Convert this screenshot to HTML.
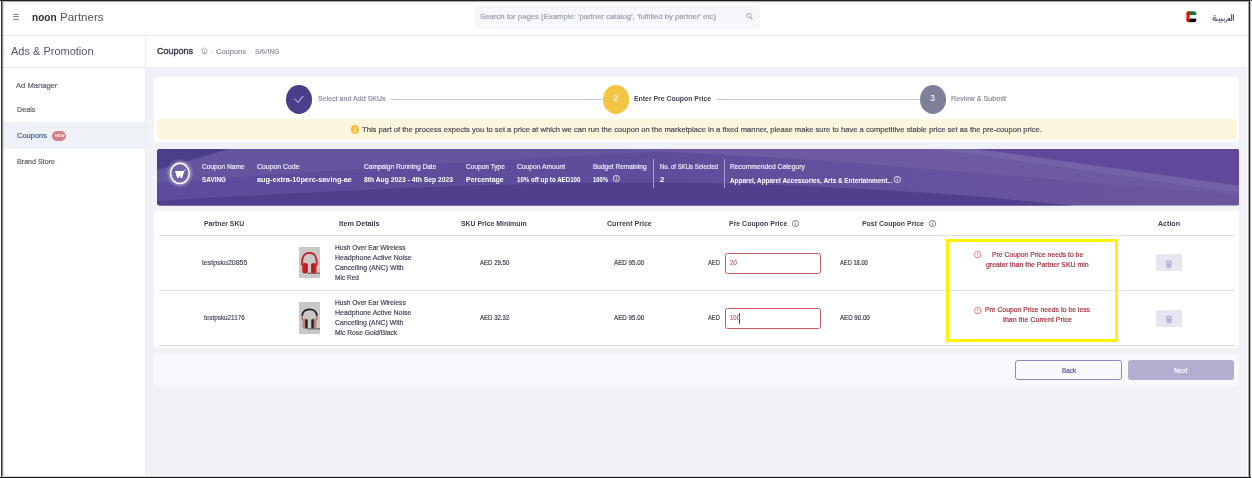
<!DOCTYPE html>
<html><head><meta charset="utf-8">
<style>
*{box-sizing:border-box;margin:0;padding:0}
html,body{width:1252px;height:478px;overflow:hidden;background:#fff;font-family:"Liberation Sans",sans-serif}
.a{position:absolute}
.t{position:absolute;white-space:nowrap;line-height:normal;transform-origin:0 0;font-family:"Liberation Sans",sans-serif}
</style></head><body>
<!-- header -->
<div class="a" style="left:0;top:35px;width:1249px;height:1px;background:#e5e9f0"></div>
<!-- hamburger -->
<div class="a" style="left:13px;top:13.5px;width:6px;height:1px;background:#7f8a9c"></div>
<div class="a" style="left:13px;top:16.3px;width:6px;height:1px;background:#7f8a9c"></div>
<div class="a" style="left:13px;top:19px;width:6px;height:1px;background:#7f8a9c"></div>
<!-- search -->
<div class="a" style="left:475px;top:6px;width:285px;height:22.5px;background:#f6f7fb;border-radius:3px"></div>
<svg class="a" style="left:745px;top:12px" width="9" height="9" viewBox="0 0 9 9"><circle cx="3.8" cy="3.5" r="2.1" fill="none" stroke="#9aa2b0" stroke-width="0.95"/><line x1="5.4" y1="5.2" x2="7.4" y2="7.6" stroke="#9aa2b0" stroke-width="1.1"/></svg>
<!-- flag -->
<svg class="a" style="left:1186px;top:11px" width="11" height="11.5" viewBox="0 0 11 11.5">
<defs><clipPath id="fc"><rect x="0.5" y="0.3" width="9.8" height="10.9" rx="2.6"/></clipPath></defs>
<g clip-path="url(#fc)"><rect x="0" y="0" width="11" height="4" fill="#0a7a2f"/><rect x="0" y="4" width="11" height="3.6" fill="#fff"/><rect x="0" y="7.6" width="11" height="4" fill="#000"/><rect x="0" y="0" width="3.4" height="11.5" fill="#f00"/></g></svg>
<!-- arabic -->
<svg class="a" style="left:1211px;top:12px" width="24" height="11" viewBox="0 0 24 11">
<g fill="none" stroke="#4f5670" stroke-width="1.1" stroke-linecap="round" stroke-linejoin="round">
<path d="M22.4 2.6 V8.3"/><path d="M20.6 2.6 V8.3 H18.6"/>
<path d="M18.6 8.3 C17.2 8.3 16.6 7.2 17.4 6.4 C18.1 5.8 19 6.5 18.6 8.3"/>
<path d="M16.9 8.3 H15.6 C15.6 9.6 14.8 10.2 13.8 10.2"/>
<path d="M13.2 8.3 V6.9 M13.2 8.3 H10.6 V6.9 M10.6 8.3 H8.6 V6.9 M8.6 8.3 H5.2"/>
<path d="M5.2 8.3 C3.2 8.6 1.9 8 2 6.8 C2.2 5.7 3.6 5.4 4.6 6.2 C5.3 6.8 5.3 8 5.2 8.3"/>
</g>
<g fill="#4f5670"><circle cx="10.9" cy="10" r="0.55"/><circle cx="8.2" cy="10" r="0.55"/><circle cx="9.4" cy="10.2" r="0.5"/><circle cx="3" cy="3.7" r="0.55"/><circle cx="4.5" cy="3.7" r="0.55"/></g>
</svg>
<!-- sidebar -->
<div class="a" style="left:145px;top:36px;width:1px;height:442px;background:#e9ebf0"></div>
<div class="a" style="left:0;top:67px;width:1249px;height:1px;background:#e6e9ef"></div>
<div class="a" style="left:2px;top:122px;width:143px;height:27px;background:#eef2f7"></div>
<div class="a" style="left:51.9px;top:130.9px;width:14.2px;height:10px;background:#d08084;border-radius:5px"></div>
<div class="t" style="left:55.3px;top:132.9px;font-size:4.2px;font-weight:700;color:#fbeeee;transform:scaleX(0.98)">NEW</div>
<!-- main bg -->
<div class="a" style="left:146px;top:68px;width:1100.7px;height:407.8px;background:#f1f2f7"></div>
<!-- breadcrumb icons -->
<svg class="a" style="left:200px;top:46px" width="9" height="9" viewBox="0 0 9 9"><path d="M1.3 4.6 L4.5 1.6 L7.7 4.6 M2.3 3.8 V7.6 H6.7 V3.8 M3.9 7.6 V5.8 H5.1 V7.6" fill="none" stroke="#9da1ab" stroke-width="0.7"/></svg>
<div class="a" style="left:211.3px;top:50.8px;width:1.6px;height:1.6px;border-radius:1px;background:#d3d6dc"></div>
<div class="a" style="left:249.8px;top:50.8px;width:1.6px;height:1.6px;border-radius:1px;background:#d3d6dc"></div>
<!-- stepper card -->
<div class="a" style="left:154px;top:77px;width:1085px;height:65px;background:#fff;border-radius:3px"></div>
<div class="a" style="left:391px;top:99px;width:211px;height:1px;background:#c9c8d8"></div>
<div class="a" style="left:717px;top:99px;width:203px;height:1px;background:#c9c8d8"></div>
<div class="a" style="left:286px;top:85.2px;width:26.3px;height:28.6px;border-radius:50%;background:#4a3f8a"></div>
<svg class="a" style="left:286px;top:85px" width="27" height="29" viewBox="0 0 27 29"><path d="M8.4 13.6 L12.2 17.4 L17.3 10.9" fill="none" stroke="#fff" stroke-width="0.8"/></svg>
<div class="a" style="left:602.9px;top:85.3px;width:26.2px;height:28.6px;border-radius:50%;background:#f2c544"></div>
<div class="t" style="left:613.2px;top:93px;font-size:8.8px;color:#fff">2</div>
<div class="a" style="left:919.8px;top:85.3px;width:26.2px;height:28.6px;border-radius:50%;background:#7c8199"></div>
<div class="t" style="left:930.1px;top:93px;font-size:8.8px;color:#fff">3</div>
<!-- notice -->
<div class="a" style="left:156.5px;top:119.4px;width:1080.5px;height:19.8px;background:#fdf5dc;border-radius:3.5px"></div>
<div class="a" style="left:350.6px;top:125px;width:8.6px;height:8.8px;border-radius:50%;background:#f0c03e"></div>
<svg class="a" style="left:350.6px;top:125px" width="9" height="9" viewBox="0 0 9 9"><path d="M4.6 3.9 L4.1 6.9" stroke="#fff" stroke-width="1.1" stroke-linecap="round"/><circle cx="4.8" cy="2.5" r="0.55" fill="#fff"/></svg>
<!-- banner -->
<svg class="a" style="left:156.5px;top:149.2px" width="1082.4" height="57" viewBox="0 0 1082.4 57">
<defs><clipPath id="bc"><rect x="0" y="0" width="1082.4" height="56.6" rx="3"/></clipPath></defs>
<g clip-path="url(#bc)">
<defs><linearGradient id="bg1" x1="0" x2="1" y1="0" y2="0"><stop offset="0" stop-color="#5c4c9b"/><stop offset="0.45" stop-color="#5e4d9b"/><stop offset="0.75" stop-color="#67539d"/><stop offset="1" stop-color="#6a569e"/></linearGradient></defs>
<rect width="1083" height="57" fill="url(#bg1)"/>
<path d="M0 21 Q38 10 71 0 H560 Q300 12 0 34 Z" fill="#6555a0"/>
<path d="M0 0 H71 Q38 10 0 21 Z" fill="#4d3e8b"/>
<path d="M0 52 C150 43 350 33 500 33.5 C640 34 800 44 920 57 H0 Z" fill="#4f3f8d"/>
<path d="M450 0 H820 L1083 37 V46 C950 35 800 22 643 10 C560 5 500 2 450 0 Z" fill="#6d5aa0"/>
<path d="M820 0 H1083 V37 Z" fill="#62489a"/>
<path d="M820 0 L1083 37 V43 C960 28 880 12 770 0 Z" fill="#7462a6"/>
</g></svg>
<svg class="a" style="left:164px;top:157px" width="32" height="33" viewBox="0 0 32 33">
<defs><filter id="gl" x="-50%" y="-50%" width="200%" height="200%"><feGaussianBlur stdDeviation="1.6"/></filter></defs>
<ellipse cx="15.9" cy="16.35" rx="10" ry="10.9" fill="none" stroke="#fff" stroke-width="3" opacity="0.45" filter="url(#gl)"/>
<ellipse cx="15.9" cy="16.35" rx="9.3" ry="10.2" fill="#7568ad" opacity="0.7"/>
<ellipse cx="15.9" cy="16.35" rx="9.3" ry="10.2" fill="none" stroke="#fff" stroke-width="1.5"/>
<path d="M11 14 L20.3 14 L18.6 19.4 L18.2 20.9 L16.6 20.9 L16.3 19.5 L15 19.5 L14.7 20.9 L13.1 20.9 L12.7 19.4 Z" fill="#fff"/>
<path d="M19.8 14.2 L21.5 12.1" stroke="#fff" stroke-width="0.7"/>
</svg>
<div class="a" style="left:653px;top:159.4px;width:1.1px;height:28.2px;background:#a99fcf"></div>
<div class="a" style="left:724px;top:159px;width:1px;height:28.5px;background:#a99fcf"></div>
<svg class="a" style="left:612px;top:174px" width="9" height="9" viewBox="0 0 9 9"><circle cx="4.3" cy="4.5" r="3.1" fill="none" stroke="#fff" stroke-width="0.8"/><line x1="4.3" y1="3.6" x2="4.3" y2="6.2" stroke="#fff" stroke-width="0.8"/><circle cx="4.3" cy="2.6" r="0.45" fill="#fff"/></svg>
<svg class="a" style="left:893px;top:175px" width="9" height="9" viewBox="0 0 9 9"><circle cx="4.3" cy="4.5" r="3.1" fill="none" stroke="#fff" stroke-width="0.8"/><line x1="4.3" y1="3.6" x2="4.3" y2="6.2" stroke="#fff" stroke-width="0.8"/><circle cx="4.3" cy="2.6" r="0.45" fill="#fff"/></svg>
<!-- table card -->
<div class="a" style="left:154px;top:210.6px;width:1085px;height:137.8px;background:#fff;border-radius:4px"></div>
<div class="a" style="left:159px;top:235px;width:1075px;height:1px;background:#dfdfe1"></div>
<div class="a" style="left:159px;top:290px;width:1075px;height:1px;background:#dfdfe1"></div>
<div class="a" style="left:159px;top:345px;width:1075px;height:1.2px;background:#d5d5d8"></div>
<svg class="a" style="left:791px;top:219px" width="9" height="9" viewBox="0 0 9 9"><circle cx="4.5" cy="4.6" r="3.1" fill="none" stroke="#50546a" stroke-width="0.75"/><line x1="4.5" y1="3.8" x2="4.5" y2="6.2" stroke="#50546a" stroke-width="0.75"/><circle cx="4.5" cy="2.8" r="0.4" fill="#50546a"/></svg>
<svg class="a" style="left:928px;top:219px" width="9" height="9" viewBox="0 0 9 9"><circle cx="4.5" cy="4.6" r="3.1" fill="none" stroke="#50546a" stroke-width="0.75"/><line x1="4.5" y1="3.8" x2="4.5" y2="6.2" stroke="#50546a" stroke-width="0.75"/><circle cx="4.5" cy="2.8" r="0.4" fill="#50546a"/></svg>
<!-- product images -->
<svg class="a" style="left:299.2px;top:247.1px" width="21" height="31" viewBox="0 0 21 31"><rect width="21" height="31" fill="#c8c8c8"/>
<rect x="8.6" y="25.6" width="12.4" height="1.3" fill="#6e6e6e"/>
<path d="M3.1 18.5 C2.4 9.5 5.6 5.9 10.4 5.9 C15.2 5.9 18.4 9.5 17.7 18.5" fill="none" stroke="#c41d27" stroke-width="1.7"/>
<rect x="3.3" y="16" width="5.4" height="10.6" rx="2.3" fill="#cd2029"/><rect x="12.1" y="16" width="5.4" height="10.6" rx="2.3" fill="#cd2029"/>
<rect x="6.8" y="17" width="1.5" height="8.6" fill="#a5161f"/><rect x="12.5" y="17" width="1.5" height="8.6" fill="#a5161f"/>
</svg>
<svg class="a" style="left:299.2px;top:302.3px" width="21" height="32" viewBox="0 0 21 32"><rect width="21" height="32" fill="#c8c8c8"/>
<rect x="8.4" y="26.2" width="12.6" height="1.3" fill="#6e6e6e"/>
<path d="M3.2 14 C3.2 10 6 7.3 10.5 7.3 C15 7.3 17.8 10 17.8 14" fill="none" stroke="#1f1f22" stroke-width="1.8"/>
<path d="M3.2 13.5 C3 15.5 3.2 17 3.4 18.5 M17.8 13.5 C18 15.5 17.8 17 17.6 18.5" fill="none" stroke="#a8786c" stroke-width="1.4"/>
<rect x="3.6" y="16.6" width="5" height="10.2" rx="2" fill="#b58476"/><rect x="12.4" y="16.6" width="5" height="10.2" rx="2" fill="#b58476"/>
<rect x="6.3" y="17.2" width="2.3" height="9.4" rx="1" fill="#222226"/><rect x="12.4" y="17.2" width="2.3" height="9.4" rx="1" fill="#222226"/>
</svg>
<!-- inputs -->
<div class="a" style="left:725.3px;top:253.1px;width:95.5px;height:20.5px;border:1.3px solid #c95a5d;border-radius:2.5px"></div>
<div class="a" style="left:725.3px;top:308.2px;width:95.5px;height:20.8px;border:1.3px solid #c95a5d;border-radius:2.5px"></div>
<div class="a" style="left:739px;top:313px;width:0.8px;height:10.5px;background:#7a2a30"></div>
<!-- yellow box -->
<div class="a" style="left:945.8px;top:239px;width:172.4px;height:103.4px;border:3.4px solid #fff300"></div>
<svg class="a" style="left:973px;top:250px" width="10" height="10" viewBox="0 0 10 10"><circle cx="4.6" cy="4.6" r="3.2" fill="none" stroke="#e25d5d" stroke-width="0.8"/><line x1="4.6" y1="2.9" x2="4.6" y2="5.2" stroke="#e25d5d" stroke-width="0.8"/><circle cx="4.6" cy="6.3" r="0.4" fill="#e25d5d"/></svg>
<svg class="a" style="left:972.8px;top:305.5px" width="10" height="10" viewBox="0 0 10 10"><circle cx="4.6" cy="4.6" r="3.2" fill="none" stroke="#e25d5d" stroke-width="0.8"/><line x1="4.6" y1="2.9" x2="4.6" y2="5.2" stroke="#e25d5d" stroke-width="0.8"/><circle cx="4.6" cy="6.3" r="0.4" fill="#e25d5d"/></svg>
<!-- trash -->
<div class="a" style="left:1156px;top:254.2px;width:26px;height:17.3px;background:#e7e5f1;border-radius:2px"></div>
<div class="a" style="left:1156px;top:309.7px;width:26px;height:17px;background:#e7e5f1;border-radius:2px"></div>
<svg class="a" style="left:1165px;top:258.5px" width="8" height="10" viewBox="0 0 8 10"><path d="M1.2 2.4 H6.8 M1.8 2.8 L2.4 8.6 H5.6 L6.2 2.8 M3.2 4 L3.4 7.4 M4.8 4 L4.6 7.4" fill="none" stroke="#9c98c8" stroke-width="0.9"/></svg>
<svg class="a" style="left:1165px;top:313.7px" width="8" height="10" viewBox="0 0 8 10"><path d="M1.2 2.4 H6.8 M1.8 2.8 L2.4 8.6 H5.6 L6.2 2.8 M3.2 4 L3.4 7.4 M4.8 4 L4.6 7.4" fill="none" stroke="#9c98c8" stroke-width="0.9"/></svg>
<!-- footer -->
<div class="a" style="left:154px;top:354.3px;width:1085px;height:31.5px;background:#f8f9fd"></div>
<div class="a" style="left:1015px;top:360px;width:107.4px;height:19.6px;border:1.3px solid #8f87c2;border-radius:3px;background:#f9f9fd"></div>
<div class="a" style="left:1128px;top:360px;width:106px;height:19.6px;background:#b1aed0;border-radius:3px"></div>
<div class="t" style="left:31.80px;top:10.86px;font-size:10.8px;font-weight:700;color:#2f2f37;transform:scaleX(0.9316);">noon</div>
<div class="t" style="left:59.70px;top:10.86px;font-size:10.8px;font-weight:400;color:#50535e;transform:scaleX(1.0655);">Partners</div>
<div class="t" style="left:479.60px;top:11.88px;font-size:7.2px;font-weight:400;color:#9aa0ad;transform:scaleX(1.0765);-webkit-text-stroke:0.2px #9aa0ad;">Search for pages (Example: 'partner catalog', 'fulfilled by partner' etc)</div>
<div class="t" style="left:11.20px;top:45.11px;font-size:11.4px;font-weight:400;color:#4f556b;transform:scaleX(0.9654);">Ads &amp; Promotion</div>
<div class="t" style="left:16.10px;top:80.71px;font-size:7.6px;font-weight:400;color:#5b5e6a;transform:scaleX(0.9995);-webkit-text-stroke:0.2px #5b5e6a;">Ad Manager</div>
<div class="t" style="left:16.60px;top:105.41px;font-size:7.6px;font-weight:400;color:#5b5e6a;transform:scaleX(0.9424);-webkit-text-stroke:0.2px #5b5e6a;">Deals</div>
<div class="t" style="left:16.60px;top:130.81px;font-size:7.6px;font-weight:400;color:#3e5b8a;transform:scaleX(0.9856);-webkit-text-stroke:0.2px #3e5b8a;">Coupons</div>
<div class="t" style="left:16.60px;top:157.11px;font-size:7.6px;font-weight:400;color:#5b5e6a;transform:scaleX(0.9397);-webkit-text-stroke:0.2px #5b5e6a;">Brand Store</div>
<div class="t" style="left:156.90px;top:45.74px;font-size:9.3px;font-weight:400;color:#3c4055;transform:scaleX(0.9692);-webkit-text-stroke:0.45px #3c4055;">Coupons</div>
<div class="t" style="left:216.00px;top:47.31px;font-size:7.6px;font-weight:400;color:#8d919d;transform:scaleX(0.9856);-webkit-text-stroke:0.2px #8d919d;">Coupons</div>
<div class="t" style="left:254.50px;top:47.31px;font-size:7.6px;font-weight:400;color:#8d919d;transform:scaleX(0.8701);-webkit-text-stroke:0.2px #8d919d;">SAVING</div>
<div class="t" style="left:317.60px;top:93.82px;font-size:7.7px;font-weight:400;color:#8c8aa6;transform:scaleX(0.9197);-webkit-text-stroke:0.2px #8c8aa6;">Select and Add SKUs</div>
<div class="t" style="left:634.30px;top:93.82px;font-size:7.7px;font-weight:700;color:#43455c;transform:scaleX(0.8943);">Enter Pre Coupon Price</div>
<div class="t" style="left:951.00px;top:93.82px;font-size:7.7px;font-weight:400;color:#8c8aa6;transform:scaleX(0.9380);-webkit-text-stroke:0.2px #8c8aa6;">Review &amp; Submit</div>
<div class="t" style="left:362.20px;top:124.53px;font-size:7.9px;font-weight:400;color:#4b4b58;transform:scaleX(0.9646);-webkit-text-stroke:0.2px #4b4b58;">This part of the process expects you to set a price at which we can run the coupon on the marketplace in a fixed manner, please make sure to have a competitive stable price set as the pre-coupon price.</div>
<div class="t" style="left:201.90px;top:162.67px;font-size:7.1px;font-weight:400;color:#ece9f6;transform:scaleX(0.9302);-webkit-text-stroke:0.2px #ece9f6;">Coupon Name</div>
<div class="t" style="left:257.00px;top:162.67px;font-size:7.1px;font-weight:400;color:#ece9f6;transform:scaleX(0.9702);-webkit-text-stroke:0.2px #ece9f6;">Coupon Code</div>
<div class="t" style="left:363.90px;top:162.67px;font-size:7.1px;font-weight:400;color:#ece9f6;transform:scaleX(0.9312);-webkit-text-stroke:0.2px #ece9f6;">Campaign Running Date</div>
<div class="t" style="left:465.70px;top:162.67px;font-size:7.1px;font-weight:400;color:#ece9f6;transform:scaleX(0.9239);-webkit-text-stroke:0.2px #ece9f6;">Coupon Type</div>
<div class="t" style="left:517.00px;top:162.67px;font-size:7.1px;font-weight:400;color:#ece9f6;transform:scaleX(0.9468);-webkit-text-stroke:0.2px #ece9f6;">Coupon Amount</div>
<div class="t" style="left:592.80px;top:162.67px;font-size:7.1px;font-weight:400;color:#ece9f6;transform:scaleX(0.9173);-webkit-text-stroke:0.2px #ece9f6;">Budget Remaining</div>
<div class="t" style="left:659.70px;top:162.67px;font-size:7.1px;font-weight:400;color:#ece9f6;transform:scaleX(0.8477);-webkit-text-stroke:0.2px #ece9f6;">No. of SKUs Selected</div>
<div class="t" style="left:729.90px;top:162.67px;font-size:7.1px;font-weight:400;color:#ece9f6;transform:scaleX(0.9504);-webkit-text-stroke:0.2px #ece9f6;">Recommended Category</div>
<div class="t" style="left:201.90px;top:176.37px;font-size:7.1px;font-weight:700;color:#ffffff;transform:scaleX(0.9028);">SAVING</div>
<div class="t" style="left:257.00px;top:176.37px;font-size:7.1px;font-weight:700;color:#ffffff;transform:scaleX(1.0289);">aug-extra-10perc-saving-ae</div>
<div class="t" style="left:364.00px;top:176.37px;font-size:7.1px;font-weight:700;color:#ffffff;transform:scaleX(0.9504);">8th Aug 2023 - 4th Sep 2023</div>
<div class="t" style="left:465.70px;top:176.37px;font-size:7.1px;font-weight:700;color:#ffffff;transform:scaleX(0.9851);">Percentage</div>
<div class="t" style="left:517.00px;top:176.37px;font-size:7.1px;font-weight:700;color:#ffffff;transform:scaleX(0.8683);">10% off up to AED100</div>
<div class="t" style="left:592.80px;top:176.37px;font-size:7.1px;font-weight:700;color:#ffffff;transform:scaleX(0.8363);">100%</div>
<div class="t" style="left:659.60px;top:176.37px;font-size:7.1px;font-weight:700;color:#ffffff;transform:scaleX(1.0912);">2</div>
<div class="t" style="left:730.00px;top:176.67px;font-size:7.1px;font-weight:700;color:#ffffff;transform:scaleX(0.9008);">Apparel, Apparel Accessories, Arts &amp; Entertainment...</div>
<div class="t" style="left:204.00px;top:219.21px;font-size:7.6px;font-weight:700;color:#3d4152;transform:scaleX(0.9003);">Partner SKU</div>
<div class="t" style="left:338.60px;top:219.21px;font-size:7.6px;font-weight:700;color:#3d4152;transform:scaleX(0.9537);">Item Details</div>
<div class="t" style="left:461.40px;top:219.21px;font-size:7.6px;font-weight:700;color:#3d4152;transform:scaleX(0.9086);">SKU Price Minimum</div>
<div class="t" style="left:606.70px;top:219.21px;font-size:7.6px;font-weight:700;color:#3d4152;transform:scaleX(0.9305);">Current Price</div>
<div class="t" style="left:729.00px;top:219.21px;font-size:7.6px;font-weight:700;color:#3d4152;transform:scaleX(0.9143);">Pre Coupon Price</div>
<div class="t" style="left:862.00px;top:219.21px;font-size:7.6px;font-weight:700;color:#3d4152;transform:scaleX(0.9120);">Post Coupon Price</div>
<div class="t" style="left:1158.20px;top:219.21px;font-size:7.6px;font-weight:700;color:#3d4152;transform:scaleX(0.9308);">Action</div>
<div class="t" style="left:201.60px;top:258.75px;font-size:6.9px;font-weight:400;color:#4a4e5e;transform:scaleX(1.0115);-webkit-text-stroke:0.2px #4a4e5e;">testpsku20855</div>
<div class="t" style="left:334.50px;top:243.75px;font-size:6.9px;font-weight:400;color:#464a5a;transform:scaleX(0.9554);-webkit-text-stroke:0.2px #464a5a;">Hush Over Ear Wireless</div>
<div class="t" style="left:334.50px;top:253.98px;font-size:6.9px;font-weight:400;color:#464a5a;transform:scaleX(1.0152);-webkit-text-stroke:0.2px #464a5a;">Headphone Active Noise</div>
<div class="t" style="left:334.50px;top:264.21px;font-size:6.9px;font-weight:400;color:#464a5a;transform:scaleX(0.9966);-webkit-text-stroke:0.2px #464a5a;">Cancelling (ANC) With</div>
<div class="t" style="left:334.50px;top:274.44px;font-size:6.9px;font-weight:400;color:#464a5a;transform:scaleX(0.9478);-webkit-text-stroke:0.2px #464a5a;">Mic Red</div>
<div class="t" style="left:479.60px;top:258.75px;font-size:6.9px;font-weight:400;color:#3d4152;transform:scaleX(0.8783);-webkit-text-stroke:0.2px #3d4152;">AED 29.50</div>
<div class="t" style="left:614.00px;top:258.75px;font-size:6.9px;font-weight:400;color:#3d4152;transform:scaleX(0.9052);-webkit-text-stroke:0.2px #3d4152;">AED 95.00</div>
<div class="t" style="left:708.00px;top:258.75px;font-size:6.9px;font-weight:400;color:#3d4152;transform:scaleX(0.8322);-webkit-text-stroke:0.2px #3d4152;">AED</div>
<div class="t" style="left:839.70px;top:258.75px;font-size:6.9px;font-weight:400;color:#3d4152;transform:scaleX(0.8333);-webkit-text-stroke:0.2px #3d4152;">AED 18.00</div>
<div class="t" style="left:203.80px;top:313.75px;font-size:6.9px;font-weight:400;color:#4a4e5e;transform:scaleX(0.9196);-webkit-text-stroke:0.2px #4a4e5e;">testpsku21176</div>
<div class="t" style="left:334.50px;top:298.75px;font-size:6.9px;font-weight:400;color:#464a5a;transform:scaleX(0.9567);-webkit-text-stroke:0.2px #464a5a;">Hush Over Ear Wireless</div>
<div class="t" style="left:334.50px;top:308.98px;font-size:6.9px;font-weight:400;color:#464a5a;transform:scaleX(1.0125);-webkit-text-stroke:0.2px #464a5a;">Headphone Active Noise</div>
<div class="t" style="left:334.50px;top:319.21px;font-size:6.9px;font-weight:400;color:#464a5a;transform:scaleX(0.9923);-webkit-text-stroke:0.2px #464a5a;">Cancelling (ANC) With</div>
<div class="t" style="left:334.50px;top:329.44px;font-size:6.9px;font-weight:400;color:#464a5a;transform:scaleX(0.9709);-webkit-text-stroke:0.2px #464a5a;">Mic Rose Gold/Black</div>
<div class="t" style="left:479.60px;top:313.75px;font-size:6.9px;font-weight:400;color:#3d4152;transform:scaleX(0.8783);-webkit-text-stroke:0.2px #3d4152;">AED 32.32</div>
<div class="t" style="left:614.00px;top:313.75px;font-size:6.9px;font-weight:400;color:#3d4152;transform:scaleX(0.9052);-webkit-text-stroke:0.2px #3d4152;">AED 95.00</div>
<div class="t" style="left:708.00px;top:313.75px;font-size:6.9px;font-weight:400;color:#3d4152;transform:scaleX(0.8322);-webkit-text-stroke:0.2px #3d4152;">AED</div>
<div class="t" style="left:839.70px;top:313.75px;font-size:6.9px;font-weight:400;color:#3d4152;transform:scaleX(0.8932);-webkit-text-stroke:0.2px #3d4152;">AED 90.00</div>
<div class="t" style="left:991.50px;top:250.65px;font-size:6.9px;font-weight:400;color:#a8343f;transform:scaleX(0.9875);-webkit-text-stroke:0.2px #a8343f;">Pre Coupon Price needs to be</div>
<div class="t" style="left:986.00px;top:260.85px;font-size:6.9px;font-weight:400;color:#a8343f;transform:scaleX(1.0039);-webkit-text-stroke:0.2px #a8343f;">greater than the Partner SKU min</div>
<div class="t" style="left:984.70px;top:306.25px;font-size:6.9px;font-weight:400;color:#a8343f;transform:scaleX(0.9856);-webkit-text-stroke:0.2px #a8343f;">Pre Coupon Price needs to be less</div>
<div class="t" style="left:1002.80px;top:316.05px;font-size:6.9px;font-weight:400;color:#a8343f;transform:scaleX(1.0220);-webkit-text-stroke:0.2px #a8343f;">than the Current Price</div>
<div class="t" style="left:730.20px;top:258.95px;font-size:6.9px;font-weight:400;color:#b8686a;transform:scaleX(0.8878);-webkit-text-stroke:0.2px #b8686a;">20</div>
<div class="t" style="left:729.50px;top:314.15px;font-size:6.9px;font-weight:400;color:#b8686a;transform:scaleX(0.8678);-webkit-text-stroke:0.2px #b8686a;">100</div>
<div class="t" style="left:1061.70px;top:366.18px;font-size:7.3px;font-weight:400;color:#5b5196;transform:scaleX(0.8784);-webkit-text-stroke:0.2px #5b5196;">Back</div>
<div class="t" style="left:1174.00px;top:366.18px;font-size:7.3px;font-weight:400;color:#ffffff;transform:scaleX(0.9066);-webkit-text-stroke:0.2px #ffffff;">Next</div>
<!-- frame -->
<div class="a" style="left:0;top:0;width:1252px;height:1px;background:#1c1c1c"></div>
<div class="a" style="left:2px;top:1px;width:1247px;height:1px;background:#b0b0b0"></div>
<div class="a" style="left:2px;top:2px;width:1247px;height:1px;background:#f2f2f2"></div>
<div class="a" style="left:1px;top:0;width:1px;height:478px;background:#303030"></div>
<div class="a" style="left:2px;top:1px;width:1px;height:476px;background:#8e8e8e"></div>
<div class="a" style="left:3px;top:2px;width:1px;height:474px;background:#dcdcdc"></div>
<div class="a" style="left:1249px;top:0;width:1px;height:478px;background:#222"></div>
<div class="a" style="left:1248px;top:1px;width:1px;height:476px;background:#a8a8a8"></div>
<div class="a" style="left:1250px;top:0;width:1px;height:478px;background:#b8b8b8"></div>
<div class="a" style="left:0;top:477px;width:1251px;height:1px;background:#141414"></div>
<div class="a" style="left:2px;top:476px;width:1247px;height:1px;background:#d8d8d8"></div>
</body></html>
